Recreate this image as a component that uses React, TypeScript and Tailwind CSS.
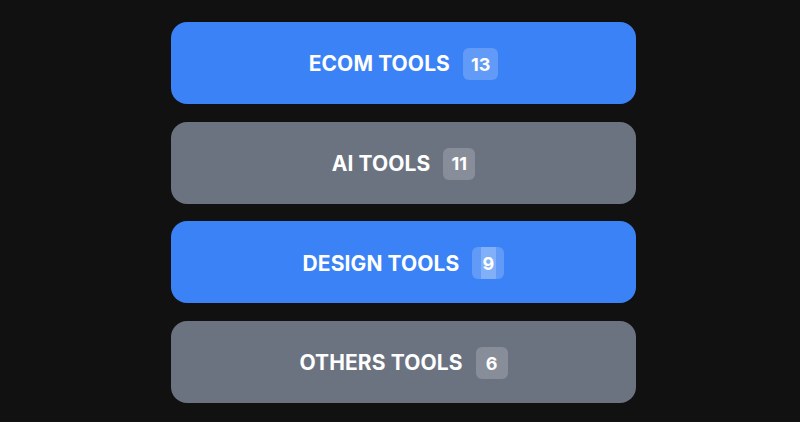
const tools = [
  { name: 'ECOM TOOLS', count: '13', active: true },
  { name: 'AI TOOLS', count: '11', active: false },
  { name: 'DESIGN TOOLS', count: '9', active: true, marked: true },
  { name: 'OTHERS TOOLS', count: '6', active: false },
];

export default function App() {
  return (
    <div
      className="flex min-h-[422px] w-full justify-center bg-[#111111] pl-[7px] pt-[22px]"
      style={{ fontFamily: 'Inter, "Noto Sans", sans-serif' }}
    >
      <div className="flex w-[465px] flex-col gap-[17.7px]">
        {tools.map((t) => (
          <button
            key={t.name}
            className={`flex h-[82px] items-center justify-center gap-[13px] rounded-2xl pt-[2px] text-white ${
              t.active ? 'bg-[#3b82f6]' : 'bg-[#6b7280]'
            }`}
          >
            <span className="text-[21px] font-bold tracking-[0.1px]">{t.name}</span>
            <span className="flex h-[32px] min-w-[32px] items-center justify-center rounded-md bg-white/20 px-[8px] text-[18px] font-bold">
              {t.marked ? (
                <span className="flex h-full items-center bg-white/20 px-[2px]">{t.count}</span>
              ) : (
                t.count
              )}
            </span>
          </button>
        ))}
      </div>
    </div>
  );
}
